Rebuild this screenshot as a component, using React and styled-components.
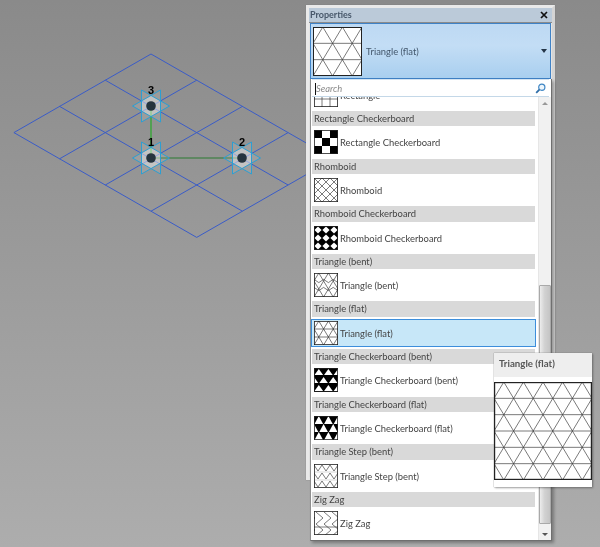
import React from "react";
import styled, { createGlobalStyle } from "styled-components";

const Global = createGlobalStyle`
  html, body { margin: 0; padding: 0; background: #999; }
  body { font-family: Lato, "Open Sans", "Liberation Sans", sans-serif; }
`;

const Page = styled.div`
  position: relative;
  width: 600px;
  height: 547px;
  overflow: hidden;
  background: linear-gradient(#8a8a8a, #adadad);
  display: flex;
  justify-content: flex-end;
  align-items: flex-start;
  padding: 5px 45px 0 0;
  box-sizing: border-box;
  filter: blur(0.35px);
`;

const Canvas = styled.svg`
  position: absolute;
  left: 0;
  top: 0;
`;

const NodeLabel = styled.text`
  font-family: "Liberation Sans", sans-serif;
  font-size: 11px;
  font-weight: 700;
  fill: #000;
  text-anchor: middle;
`;

const Panel = styled.section`
  position: relative;
  width: 249px;
  height: 475px;
  box-sizing: border-box;
  background: #e4e4e4;
  border: 3px solid #e9e9e9;
  border-right-color: #d4d4d4;
  padding: 0 1px;
  box-shadow: 0 0 1px #777;
`;

const TitleBar = styled.header`
  height: 15px;
  margin: 0 -1px;
  background: #bbcad9;
  display: flex;
  align-items: center;
  justify-content: space-between;
  padding: 0 4px 1px 1px;
  box-sizing: border-box;
  border-bottom: 1px solid #8b8b8b;
`;

const Title = styled.h2`
  margin: 0;
  font-size: 9px;
  font-weight: 700;
  color: #47576a;
`;

const Combo = styled.div`
  height: 56px;
  box-sizing: border-box;
  display: flex;
  align-items: center;
  gap: 4px;
  padding: 0 3px 0 2px;
  border: 1px solid #3f82c6;
  background: linear-gradient(#bdd9f3, #c3ddf5 40%, #a9cfef);
  font-size: 9.4px;
  color: #42566b;
`;

const ComboLabel = styled.span`
  flex: 1;
`;

const Caret = styled.span`
  width: 0;
  height: 0;
  border-left: 3.5px solid transparent;
  border-right: 3.5px solid transparent;
  border-top: 4px solid #243548;
`;

const Swatch = styled.svg`
  display: block;
  flex: none;
  background: #fff;
  overflow: hidden;
`;

const Dropdown = styled.div`
  position: absolute;
  left: 1px;
  top: 71px;
  width: 242px;
  height: 462px;
  box-sizing: border-box;
  display: flex;
  flex-direction: column;
  background: #fff;
  border: 1px solid #6f6f6f;
  border-top: 0;
  border-left-color: #8e8e8e;
  box-shadow: 2px 2px 3px rgba(0, 0, 0, 0.3);
`;

const SearchRow = styled.div`
  flex: none;
  height: 17px;
  margin: 1px 2px 0 1px;
  box-sizing: border-box;
  display: flex;
  align-items: center;
  justify-content: space-between;
  padding: 1px 3px 0 3px;
  background: #fff;
  border-bottom: 1px solid #c4d8e8;
  box-shadow: 0 -1px 0 #d4e4f2;
`;

const SearchPlaceholder = styled.span`
  font-size: 9.4px;
  font-style: italic;
  color: #8a8a8a;
  border-left: 1px solid #111;
  line-height: 12px;
`;

const Body = styled.div`
  flex: 1;
  min-height: 0;
  display: flex;
  overflow: hidden;
`;

const List = styled.div`
  flex: 1;
  min-width: 0;
  padding: 0 3px 0 1px;
  overflow: hidden;
`;

const ListInner = styled.div`
  margin-top: -33.6px;
`;

const Group = styled.div`
  height: 47.6px;
`;

const GroupHeader = styled.div`
  height: 15.4px;
  line-height: 16.4px;
  background: #d9d9d9;
  padding-left: 2px;
  font-size: 9.4px;
  color: #444;
  white-space: nowrap;
`;

const Row = styled.div`
  height: 28px;
  margin: 2px -1px 0;
  box-sizing: border-box;
  display: flex;
  align-items: center;
  gap: 2px;
  padding-left: 2px;
  font-size: 9.4px;
  color: #444;
  white-space: nowrap;
  background: ${(p) => (p.$selected ? "#c7e7f8" : "transparent")};
  border: 1px solid ${(p) => (p.$selected ? "#3d8edb" : "transparent")};
`;

const RowLabel = styled.span`
  padding-top: 1px;
`;

const Scrollbar = styled.div`
  flex: none;
  width: 12px;
  background: #f1f1f1;
  position: relative;
  border-left: 1px solid #e6e6e6;
`;

const Thumb = styled.div`
  position: absolute;
  left: 0;
  right: 0;
  top: 188px;
  height: 239px;
  box-sizing: border-box;
  border: 1px solid #a9a9a9;
  border-radius: 1px;
  background: linear-gradient(90deg, #ececec, #d2d2d2 45%, #c4c4c4);
`;

const Arrow = styled.span`
  position: absolute;
  left: 3px;
  width: 0;
  height: 0;
  border-left: 3px solid transparent;
  border-right: 3px solid transparent;
  ${(p) =>
    p.$down
      ? "bottom: 4px; border-top: 3px solid #555;"
      : "top: 5px; border-bottom: 3px solid #999;"}
`;

const Tooltip = styled.aside`
  position: absolute;
  left: 494px;
  top: 353px;
  width: 98px;
  height: 134px;
  background: #fff;
  box-shadow: 0 0 1px #777, 1px 1px 2px rgba(0, 0, 0, 0.35);
`;

const TooltipTitle = styled.div`
  height: 24px;
  margin-bottom: 5px;
  padding-left: 5px;
  line-height: 21px;
  background: #eeeeee;
  font-size: 9.7px;
  font-weight: 700;
  color: #565656;
`;

/* ---- canvas ---- */
const GX = [45.7, 26.2];
const pt = (a, b) => [151 + (b - a) * GX[0], 54 + (a + b) * GX[1]];
const gridLines = [];
for (let a = 0; a <= 3; a++) gridLines.push([pt(a, 0), pt(a, 4)]);
for (let b = 0; b <= 4; b++) gridLines.push([pt(0, b), pt(3, b)]);

function Node({ x, y, n }) {
  const t = 9.5;
  const h = 16;
  const tip = 18.5;
  return (
    <g>
      <polygon points={`${x - t},${y - h} ${x - t},${y + h} ${x + tip},${y}`} fill="rgba(255,255,255,.1)" />
      <polygon points={`${x + t},${y - h} ${x + t},${y + h} ${x - tip},${y}`} fill="rgba(255,255,255,.1)" />
      <polygon
        points={`${x},${y - 10.6} ${x + t},${y - 5.1} ${x + t},${y + 5.1} ${x},${y + 10.6} ${x - t},${y + 5.1} ${x - t},${y - 5.1}`}
        fill="rgba(255,255,255,.32)"
      />
      <polygon points={`${x - t},${y - h} ${x - t},${y + h} ${x + tip},${y}`} fill="none" stroke="#2c9fd3" strokeWidth="1" />
      <polygon points={`${x + t},${y - h} ${x + t},${y + h} ${x - tip},${y}`} fill="none" stroke="#2c9fd3" strokeWidth="1" />
      <circle cx={x} cy={y} r="4.8" fill="#26343e" />
      <NodeLabel x={x} y={y - 12}>{n}</NodeLabel>
    </g>
  );
}

/* ---- swatches ---- */
const lineProps = { stroke: "#333", strokeWidth: 0.65, fill: "none" };

function triangles(s, cols, rows, bent) {
  const w = s / cols;
  const h = s / rows;
  const els = [];
  const xs = (r) => {
    const out = [];
    const off = r % 2 === 0 ? 0.5 : 0;
    for (let k = -1; k <= cols + 1; k++) out.push((k + off) * w);
    return out;
  };
  for (let r = 0; r < rows; r++) {
    xs(r).forEach((x, i) => {
      els.push(<line key={`a${r}-${i}`} x1={x} y1={r * h} x2={x + w / 2} y2={(r + 1) * h} {...lineProps} />);
      els.push(<line key={`b${r}-${i}`} x1={x} y1={r * h} x2={x - w / 2} y2={(r + 1) * h} {...lineProps} />);
    });
  }
  for (let r = 1; r < rows; r++) {
    if (bent) {
      const pts = [];
      for (let k = -1; k <= 2 * cols + 2; k++) pts.push(`${(k * w) / 2},${r * h + (k % 2 === 0 ? -1.6 : 1.6)}`);
      els.push(<polyline key={`h${r}`} points={pts.join(" ")} {...lineProps} />);
    } else {
      els.push(<line key={`h${r}`} x1="0" y1={r * h} x2={s} y2={r * h} {...lineProps} />);
    }
  }
  return els;
}

function triChecker(offset) {
  const els = [<rect key="bg" width="24" height="24" fill="#000" />];
  [0, 1, 2].forEach((r) => {
    const off = r % 2 === 0 ? 4.8 : 0;
    for (let k = -1; k < 3; k++) {
      const x = off + k * 9.6;
      const y = r * 8;
      els.push(
        <polygon
          key={`${r}-${k}`}
          points={`${x},${y + offset} ${x + 4.3},${y + 8 - offset} ${x - 4.3},${y + 8 - offset}`}
          fill="#fff"
        />
      );
    }
  });
  return els;
}

function drawing(kind) {
  switch (kind) {
    case "rect":
      return [8, 16].map((x) => <line key={x} x1={x} y1="0" x2={x} y2="24" {...lineProps} />).concat(
        [8, 16].map((y) => <line key={`y${y}`} x1="0" y1={y} x2="24" y2={y} {...lineProps} />)
      );
    case "rectCheck":
      return [0, 1, 2].flatMap((r) =>
        [0, 1, 2].map((c) => (r + c) % 2 === 0 && <rect key={`${r}${c}`} x={c * 8} y={r * 8} width="8" height="8" fill="#000" />)
      );
    case "rhomb":
      return [-24, -16, -8, 0, 8, 16, 24].flatMap((d) => [
        <line key={`p${d}`} x1={d} y1="0" x2={d + 24} y2="24" {...lineProps} />,
        <line key={`n${d}`} x1={d} y1="24" x2={d + 24} y2="0" {...lineProps} />,
      ]);
    case "rhombCheck": {
      const els = [<rect key="bg" width="24" height="24" fill="#000" />];
      [0, 1, 2].forEach((r) =>
        [0, 1, 2].forEach((c) => {
          const x = c * 8 + 4;
          const y = r * 8 + 4;
          els.push(<polygon key={`${r}-${c}`} points={`${x},${y - 3.6} ${x + 3.6},${y} ${x},${y + 3.6} ${x - 3.6},${y}`} fill="#fff" />);
        })
      );
      return els;
    }
    case "triBent":
      return triangles(24, 2.5, 3, true);
    case "triFlat":
      return triangles(24, 2.5, 3, false);
    case "triCheckBent":
      return triChecker(0.9);
    case "triCheckFlat":
      return triChecker(0);
    case "triStep":
      return [0, 8, 16].flatMap((y) => {
        const top = [0, 4, 8, 12, 16, 20, 24].map((x, i) => `${x},${y + (i % 2 ? 7 : 1)}`).join(" ");
        return [
          <polyline key={`t${y}`} points={top} {...lineProps} />,
          y > 0 && <line key={`l${y}`} x1="0" y1={y} x2="24" y2={y} stroke="#999" strokeWidth="0.4" />,
        ];
      });
    case "zigzag":
      return [-6, 2, 10, 18].map((x) => (
        <polyline key={`z${x}`} points={`${x},1 ${x + 7},7 ${x},13 ${x + 7},19 ${x},25`} {...lineProps} />
      )).concat([<line key="h" x1="0" y1="16" x2="24" y2="16" {...lineProps} />]);
    default:
      return null;
  }
}

function Pattern({ kind, size = 24 }) {
  return (
    <Swatch width={size} height={size} viewBox="0 0 24 24">
      {drawing(kind)}
      <rect x="0.4" y="0.4" width="23.2" height="23.2" fill="none" stroke="#222" strokeWidth="0.8" />
    </Swatch>
  );
}

function PreviewPattern({ size, cols, rows, sw }) {
  return (
    <Swatch width={size} height={size} viewBox={`0 0 ${size} ${size}`}>
      {triangles(size, cols, rows, false)}
      <rect x={sw / 2} y={sw / 2} width={size - sw} height={size - sw} fill="none" stroke="#222" strokeWidth={sw} />
    </Swatch>
  );
}

const groups = [
  ["Rectangle", "rect"],
  ["Rectangle Checkerboard", "rectCheck"],
  ["Rhomboid", "rhomb"],
  ["Rhomboid Checkerboard", "rhombCheck"],
  ["Triangle (bent)", "triBent"],
  ["Triangle (flat)", "triFlat", true],
  ["Triangle Checkerboard (bent)", "triCheckBent"],
  ["Triangle Checkerboard (flat)", "triCheckFlat"],
  ["Triangle Step (bent)", "triStep"],
  ["Zig Zag", "zigzag"],
];

export default function App() {
  return (
    <>
      <Global />
      <Page>
        <Canvas width="600" height="547" viewBox="0 0 600 547">
          {gridLines.map(([p, q], i) => (
            <line key={i} x1={p[0]} y1={p[1]} x2={q[0]} y2={q[1]} stroke="#3a5cc8" strokeWidth="1" />
          ))}
          <line x1="151" y1="158" x2="151" y2="106" stroke="#52a052" strokeWidth="2" />
          <line x1="151" y1="158" x2="242" y2="158" stroke="#2a7a30" strokeWidth="1" />
          <Node x={151} y={106} n="3" />
          <Node x={151} y={158} n="1" />
          <Node x={242} y={158} n="2" />
        </Canvas>
        <Panel>
          <TitleBar>
            <Title>Properties</Title>
            <svg width="8" height="8" viewBox="0 0 8 8">
              <path d="M1 1 L7 7 M7 1 L1 7" stroke="#111" strokeWidth="1.7" />
            </svg>
          </TitleBar>
          <Combo>
            <PreviewPattern size={49} cols={2.5} rows={3} sw={1} />
            <ComboLabel>Triangle (flat)</ComboLabel>
            <Caret />
          </Combo>
          <Dropdown>
            <SearchRow>
              <SearchPlaceholder>Search</SearchPlaceholder>
              <svg width="11" height="11" viewBox="0 0 11 11">
                <circle cx="6.8" cy="4.2" r="3.1" fill="#eef6fc" stroke="#3f86c4" strokeWidth="1.2" />
                <path d="M4.6 6.4 L1.2 9.8" stroke="#2f6ea8" strokeWidth="1.8" />
              </svg>
            </SearchRow>
            <Body>
              <List>
                <ListInner>
                  {groups.map(([name, kind, selected]) => (
                    <Group key={name}>
                      <GroupHeader>{name}</GroupHeader>
                      <Row $selected={selected}>
                        <Pattern kind={kind} />
                        <RowLabel>{name}</RowLabel>
                      </Row>
                    </Group>
                  ))}
                </ListInner>
              </List>
              <Scrollbar>
                <Arrow />
                <Thumb />
                <Arrow $down />
              </Scrollbar>
            </Body>
          </Dropdown>
        </Panel>
        <Tooltip>
          <TooltipTitle>Triangle (flat)</TooltipTitle>
          <PreviewPattern size={98} cols={5} rows={6} sw={1.2} />
        </Tooltip>
      </Page>
    </>
  );
}
